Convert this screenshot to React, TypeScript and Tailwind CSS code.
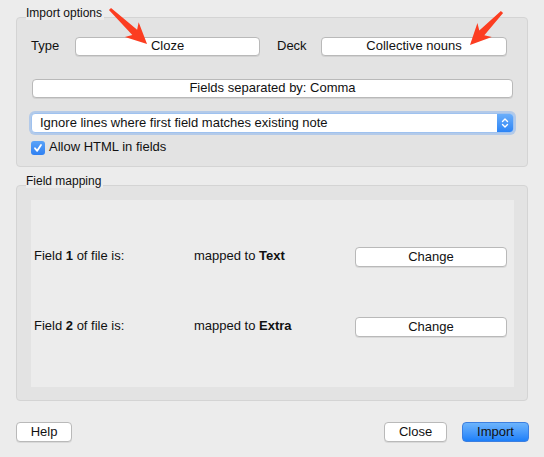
import type { ReactNode } from "react";

function MacButton({ children, className = "" }: { children: ReactNode; className?: string }) {
  return (
    <button
      className={`flex items-center justify-center rounded-[4px] border border-[#b9b9b9] bg-white pb-[2px] text-[13px] leading-none text-[#111] shadow-[0_1px_0_rgba(0,0,0,0.08)] ${className}`}
    >
      {children}
    </button>
  );
}

function GroupBox({ title, children, className = "" }: { title: string; children: ReactNode; className?: string }) {
  return (
    <div className={`relative rounded-[4px] border border-[#d4d4d4] bg-[#e3e3e3] ${className}`}>
      <span className="absolute left-[9px] top-[-12px] bg-[#ececec] pr-[2px] text-[12px] leading-[14px] text-[#111]">
        {title}
      </span>
      {children}
    </div>
  );
}

function Arrow({ x, y, angle, len }: { x: number; y: number; angle: number; len: number }) {
  const h = len - 19;
  return (
    <g transform={`translate(${x} ${y}) rotate(${angle})`}>
      <polygon
        points={`0,-1.5 ${h + 2},-3.5 ${h - 2},-10 ${len},0 ${h - 2},10 ${h + 2},3.5 0,1.5`}
        fill="#fc3d21"
        strokeLinejoin="round"
      />
    </g>
  );
}

export default function App() {
  return (
    <div className="relative h-[457px] w-[544px] overflow-hidden bg-[#ececec] font-['Liberation_Sans',Arial,sans-serif] text-[13px] text-[#111]">
      <div className="px-[16px] pt-[17px]">
        <GroupBox title="Import options" className="h-[150px] pl-[14px] pt-[19px]">
          <div className="flex h-[19px] items-center">
            <span className="w-[44px] pb-[2px]">Type</span>
            <MacButton className="h-[19px] w-[185px]">Cloze</MacButton>
            <span className="ml-[17px] w-[44px] pb-[2px]">Deck</span>
            <MacButton className="h-[19px] w-[186px]">Collective nouns</MacButton>
          </div>

          <MacButton className="ml-[1px] mt-[23px] h-[19px] w-[481px]">Fields separated by: Comma</MacButton>

          <div className="mt-[15px] flex h-[20px] w-[483px] items-stretch rounded-[4px] border border-[#9fc2ef] bg-white shadow-[0_0_0_2px_rgba(120,170,240,0.45)]">
            <span className="flex flex-1 items-center pb-[1px] pl-[8px] leading-none">
              Ignore lines where first field matches existing note
            </span>
            <span className="flex w-[16px] items-center justify-center rounded-r-[3px] bg-gradient-to-b from-[#6aaefa] to-[#2a84f6]">
              <svg width="8" height="12" viewBox="0 0 8 12" fill="none" stroke="white" strokeWidth="1.4" strokeLinecap="round" strokeLinejoin="round">
                <path d="M1.5 4.5 L4 2 L6.5 4.5" />
                <path d="M1.5 7.5 L4 10 L6.5 7.5" />
              </svg>
            </span>
          </div>

          <label className="mt-[7px] flex h-[15px] items-center gap-[4px]">
            <span className="flex h-[14px] w-[14px] items-center justify-center rounded-[3px] bg-gradient-to-b from-[#5aa3f8] to-[#2f80f2]">
              <svg width="10" height="10" viewBox="0 0 10 10" fill="none" stroke="white" strokeWidth="1.8" strokeLinecap="round" strokeLinejoin="round">
                <path d="M2 5.3 L4.2 7.8 L8 2" />
              </svg>
            </span>
            <span className="pb-[2px] leading-none">Allow HTML in fields</span>
          </label>
        </GroupBox>

        <GroupBox title="Field mapping" className="mt-[18px] h-[216px] px-[14px] pt-[14px]">
          <div className="h-[187px] w-[483px] bg-[#ececec] pl-[3px] pt-[47px]">
            <div className="flex h-[20px] items-center">
              <span className="w-[160px] pb-[2px]">
                Field <b>1</b> of file is:
              </span>
              <span className="w-[161px] pb-[2px]">
                mapped to <b>Text</b>
              </span>
              <MacButton className="h-[20px] w-[152px]">Change</MacButton>
            </div>
            <div className="mt-[50px] flex h-[20px] items-center">
              <span className="w-[160px] pb-[2px]">
                Field <b>2</b> of file is:
              </span>
              <span className="w-[161px] pb-[2px]">
                mapped to <b>Extra</b>
              </span>
              <MacButton className="h-[20px] w-[152px]">Change</MacButton>
            </div>
          </div>
        </GroupBox>
      </div>

      <div className="mt-[21px] flex items-center justify-between pl-[16px] pr-[15px]">
        <MacButton className="h-[20px] w-[56px]">Help</MacButton>
        <div className="flex gap-[15px]">
          <MacButton className="h-[20px] w-[63px]">Close</MacButton>
          <button className="flex h-[20px] w-[67px] items-center justify-center rounded-[4px] border border-[#3c7fe0] bg-gradient-to-b from-[#6cb4fc] to-[#1b7ff9] pb-[2px] text-[13px] leading-none text-[#111]">
            Import
          </button>
        </div>
      </div>

      <svg className="pointer-events-none absolute left-0 top-0" width="544" height="60">
        <Arrow x={110} y={9} angle={43.4} len={51} />
        <Arrow x={502} y={12} angle={134.1} len={46} />
      </svg>
    </div>
  );
}
